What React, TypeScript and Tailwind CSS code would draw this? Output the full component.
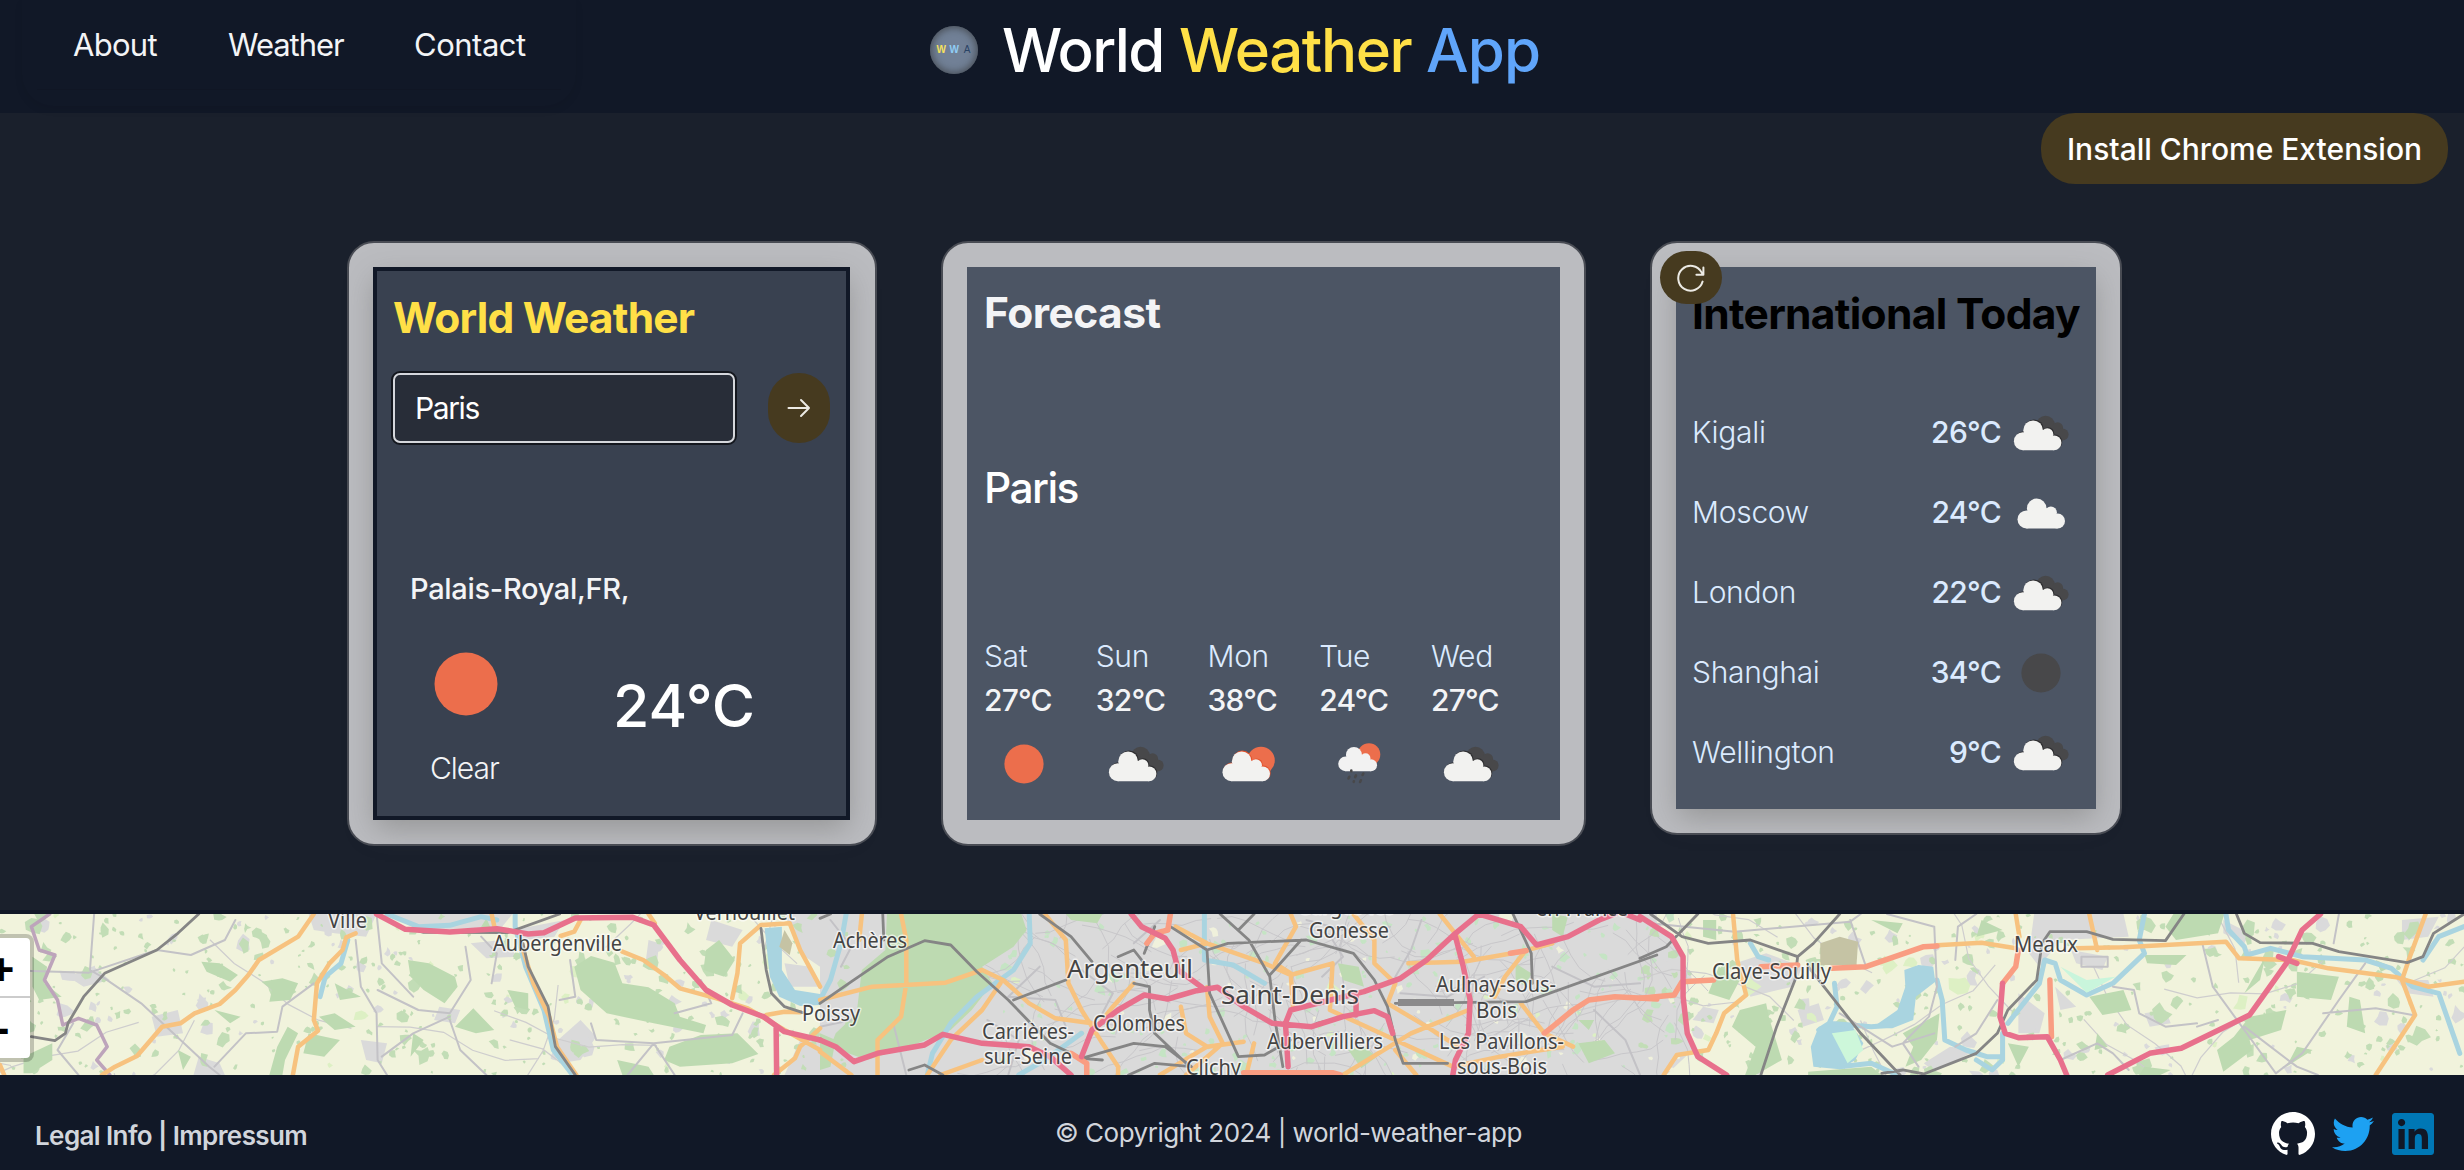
import type { ReactNode } from "react";
import { BsGithub } from "react-icons/bs";
import { FaLinkedin, FaTwitter } from "react-icons/fa";

/* ---------- weather icons (80 x 80 box) ---------- */

function CloudShape({ transform, fill }: { transform?: string; fill: string }) {
  return (
    <g transform={transform} fill={fill}>
      <circle cx="21.9" cy="48.2" r="9" />
      <circle cx="32.1" cy="37.2" r="9.8" />
      <circle cx="46.3" cy="41.2" r="6" />
      <circle cx="53" cy="49.8" r="7.4" />
      <path d="M21.9 41 L36 36 L47 38 L53 45 V57.2 H21.9Z" />
    </g>
  );
}

function IconBox({ children, size = "size-20" }: { children: ReactNode; size?: string }) {
  return (
    <svg viewBox="0 0 80 80" className={`${size} shrink-0`} aria-hidden="true">
      {children}
    </svg>
  );
}

function ClearIcon({ fill = "#ec6e4c" }: { fill?: string }) {
  return (
    <IconBox>
      <circle cx="40" cy="40" r="19.6" fill={fill} />
    </IconBox>
  );
}

function BrokenCloudsIcon() {
  return (
    <IconBox>
      <g fill="#48484a">
        <circle cx="44.6" cy="32" r="9.3" />
        <circle cx="56.6" cy="34.8" r="5.5" />
        <circle cx="61.5" cy="41.5" r="6.1" />
        <path d="M44 32 L58 32 L62 40 V47.5 H46Z" />
      </g>
      <CloudShape fill="#2f2f31" transform="translate(0.9 -0.9)" />
      <CloudShape fill="#f2f2f0" />
    </IconBox>
  );
}

function FewCloudsIcon() {
  return (
    <IconBox>
      <circle cx="53" cy="36.5" r="13.8" fill="#ec6e4c" />
      <CloudShape fill="#e2522c" transform="translate(2.3 -0.8)" />
      <CloudShape fill="#f2f2f0" transform="translate(1.6 0)" />
    </IconBox>
  );
}

function ShowerIcon() {
  return (
    <IconBox>
      <circle cx="50" cy="30.5" r="11.3" fill="#ec6e4c" />
      <CloudShape fill="#f2f2f2" transform="translate(8.7 0.5) scale(0.817)" />
      <g stroke="#48484a" strokeWidth="2.6" strokeLinecap="round">
        <path d="M32.3 46.6v.6M30.3 52.8l-.8 1.7M37 51.4l-.8 1.7M44.3 49.5l-.7 1.5M34.9 57.3l-.2.5M41.9 56.3l-.8 1.7" />
      </g>
    </IconBox>
  );
}

function CloudIcon() {
  return (
    <IconBox>
      <CloudShape fill="#f2f2f0" transform="translate(3.6 -1.8)" />
    </IconBox>
  );
}

/* ---------- map ---------- */

function makeRandom(seed: number) {
  let s = seed;
  return () => {
    s = (s * 1664525 + 1013904223) % 4294967296;
    return s / 4294967296;
  };
}

function scatter(seed: number, count: number, x0: number, x1: number, rMin: number, rMax: number) {
  const rnd = makeRandom(seed);
  let d = "";
  for (let i = 0; i < count; i++) {
    const cx = x0 + rnd() * (x1 - x0);
    const cy = rnd() * 161;
    const r = rMin + rnd() * rnd() * (rMax - rMin);
    const n = 7;
    for (let k = 0; k < n; k++) {
      const a = (k / n) * Math.PI * 2;
      const rr = r * (0.4 + rnd() * 0.9);
      d += `${k ? "L" : "M"}${(cx + Math.cos(a) * rr).toFixed(1)} ${(cy + Math.sin(a) * rr).toFixed(1)}`;
    }
    d += "Z";
  }
  return d;
}

function streets(seed: number, count: number, x0: number, x1: number, step: number) {
  const rnd = makeRandom(seed);
  let d = "";
  for (let i = 0; i < count; i++) {
    let x = x0 + rnd() * (x1 - x0);
    let y = rnd() * 161;
    let a = rnd() * Math.PI * 2;
    d += `M${x.toFixed(1)} ${y.toFixed(1)}`;
    for (let k = 0; k < 5; k++) {
      a += (rnd() - 0.5) * 0.9;
      x += Math.cos(a) * step;
      y += Math.sin(a) * step;
      d += `L${x.toFixed(1)} ${y.toFixed(1)}`;
    }
  }
  return d;
}

const ruralGreens = scatter(7, 300, 0, 850, 1.5, 10) + scatter(21, 280, 1640, 2464, 1.5, 10);
const ruralTowns = scatter(3, 90, 0, 850, 2, 12) + scatter(13, 90, 1640, 2464, 2, 12);
const meadow = scatter(31, 45, 0, 2464, 2, 12);
const cityGreens = scatter(5, 190, 1000, 1680, 1.5, 9);
const cityFields = scatter(9, 50, 1000, 1680, 2, 9);
const cityStreets = streets(17, 150, 1000, 1680, 15);
const ruralRoads = streets(19, 14, 0, 800, 34) + streets(23, 14, 1680, 2464, 34);

type Section = {
  transform: string;
  town?: string;
  forest?: string;
  water?: string;
  lake?: string;
  minor?: string;
  primary?: string;
  trunk?: string;
  motorway?: string;
  rail?: string;
};

const sections: Section[] = [
  {
    transform: "translate(0 -14) scale(0.523 0.33333)",
    town: "M590 42H720L700 110L640 100L600 90ZM740 42H980L960 80L820 90ZM900 130L960 120L990 170L930 175ZM980 90L1080 60L1060 110L1000 120ZM1360 60L1420 90L1400 140L1350 120ZM130 230L180 200L210 240L160 260ZM290 350L340 330L350 400L300 410ZM840 320L880 330L870 370L830 360ZM1060 430L1110 360L1140 410L1110 480L1070 490ZM690 420L740 430L730 490L700 480ZM1530 420L1568 400V525H1500ZM1240 120L1260 130L1255 210L1235 180ZM380 470L420 490L430 525H370ZM1500 190L1550 200L1568 260H1510ZM1500 42H1568V200L1530 160Z",
    forest:
      "M385 185L420 190L455 225L440 245L395 215ZM500 245L540 235L570 250L555 300L515 305L520 270ZM780 180L820 190L870 230L875 260L850 310L810 270L785 230ZM1130 168L1175 188L1190 250L1240 262L1290 310L1300 350L1350 375L1345 400L1250 370L1160 340L1110 270L1098 200ZM1280 440L1340 405L1410 400L1450 462L1400 490L1300 500L1270 480ZM1375 120L1405 180L1385 230L1345 210L1350 150ZM62 170L90 200L85 250L118 290L75 300L62 260ZM45 470L100 430L100 480L60 520H45ZM870 380L905 325L945 390L910 400ZM640 250L690 290L650 300ZM550 380L570 400L545 480L540 525H515L530 440ZM590 400L650 420L620 470L580 460ZM970 270L1010 280L1010 330L985 320ZM1180 480L1240 500L1250 525H1190ZM790 400L810 420L785 470ZM340 450L365 470L350 510ZM610 350L640 340L680 380L640 390ZM410 330L460 350L440 370ZM930 55L940 90L920 80Z",
    lake: "M1462 85L1495 80L1495 210L1520 270L1568 282V315L1530 318L1490 290L1472 230Z",
    water:
      "M740 42L800 80L860 76L920 50L950 60M985 42V80L1005 200L1040 330L1058 450L1095 525M665 120L652 190L622 230L612 290",
    minor:
      "M0 210L170 218L300 150L365 165L430 120L450 60M200 235L270 310L400 500L420 525M180 42L172 210L200 235M680 120L690 260L720 340L722 480L740 525M722 270L800 330L860 340L900 240L890 140M860 350L790 400L730 470M860 360L880 450L930 525M1090 180L1100 290L1070 300M1130 370L1140 420L1250 430L1400 405L1420 340M1250 430L1290 525M1250 430L1200 525M410 500L470 400L530 395L540 320L600 250M140 370L110 450L150 525M720 42L730 190L790 290M940 250L950 160L920 110M1290 340L1360 310L1340 240M60 410L0 430",
    primary:
      "M195 525L220 500L262 468L310 380L345 370L372 340L420 312L450 270L475 225L495 180L570 110L600 42M560 525L570 440L608 392L600 360L606 250L630 190L655 150L662 112L680 100M940 42L947 92M1072 108L1098 95L1110 60M1190 155L1230 180L1270 225L1300 265L1370 295L1430 325L1500 390L1568 450M1400 295L1410 220L1415 130L1455 75L1510 70L1530 150L1568 260M1568 385L1530 440L1520 475L1480 525M1465 345L1500 335L1530 337M1000 150L1020 250L1050 350L1065 440L1102 525M0 495L8 525M1240 42L1252 70",
    motorway:
      "M720 42L775 88L860 96L950 86L1010 102L1040 98L1100 54L1210 52L1250 75L1300 180L1350 270L1400 315L1460 350L1500 395L1568 420M1485 525L1484 385",
    rail: "M380 42L340 100L300 150L200 220L160 290L130 370L125 400L105 422L60 410M780 85L810 97L970 98L1070 42M1455 85L1465 210L1475 280L1500 320L1535 338M1000 130L1010 200L1048 320L1062 440L1100 525",
  },
  {
    transform: "translate(820 -14) scale(0.523 0.33333)",
    town: "M0 42H1600V525H0Z",
    forest:
      "M128 42H385L395 90L370 140L310 200L330 250L290 330L250 390L170 440L90 480L20 440L30 400L70 340L80 210L125 150ZM1010 450L1040 440L1065 470L1035 505ZM1450 430L1500 420L1520 460L1470 490ZM990 190L1030 200L1040 260L1000 240ZM470 42H540L530 70L480 60ZM0 400L30 420L20 500L0 510ZM1450 360L1480 360L1470 390ZM1330 190L1360 220L1350 260L1330 240ZM1400 42L1430 50L1420 110L1400 90Z",
    water:
      "M50 42L40 130L20 240L0 300M400 42L402 130L370 210L300 290L250 370L215 460L205 525M380 525L430 480L500 400M735 42V180L790 195L850 250",
    minor:
      "M420 200L360 290L450 300L470 380M140 370L165 525M0 380L60 360M1150 60L1130 150L1100 230M980 120L1000 170L960 230M500 210L560 280L540 340M650 60L600 130M320 360L380 420L360 525M1400 200L1480 260L1568 250M1480 330L1540 420L1568 525M1270 230L1200 290L1110 280M930 60L1000 90L1090 80M20 60L60 140L40 200",
    primary:
      "M155 42L165 120V250L155 350L110 420V525M0 300L100 260L240 248L310 210L350 240L400 310L450 355L520 370M205 525L250 420L310 330L345 250M430 42L470 120L475 250L500 330L540 430L570 500V525M650 525L740 440L810 425M740 262L745 350L770 430L700 525M680 80L740 130L850 190L900 225L980 190L975 330M900 42L910 80L870 190L900 220L905 330M1020 42L1060 120V190L1100 250L1085 310L1160 380L1220 440M975 330L1100 420L1210 500M1240 330L1130 400L1000 525M1125 190L1230 185L1340 155L1400 130M1185 42L1250 170M1345 160L1310 230L1290 290M1340 310L1385 400L1440 440M1100 450L1140 525M80 42L75 120M0 455L60 525M690 320L700 400L740 440M230 525L310 480M1210 500L1300 470L1420 440M600 250L560 320L520 400M830 430L815 525M740 130L690 150",
    trunk:
      "M810 518H980L995 525M1385 400L1440 330L1470 300L1520 290L1600 297M670 42L665 90L640 100L625 130M480 460L510 490V525M1320 160L1350 152",
    motorway:
      "M0 420L30 440L65 485L110 460L200 435L235 403L310 430L400 440L440 470L480 525M500 470L520 390L570 330L620 285L665 297L720 272L760 262L810 320L865 370L940 380L1000 350L1060 332L1085 350L1095 400M595 42L615 80L660 115L675 150L685 210L730 262M895 500L890 370L900 330L1040 275L1110 235L1160 180L1215 100L1260 42M1215 110L1230 200L1243 300L1240 400L1215 480L1210 525M1260 42L1340 80L1370 135L1430 110L1490 60L1520 42M1540 42L1568 60M1025 280V345",
    rail: "M0 310L60 245L130 170L200 122L250 135L300 215L360 300L440 430L500 475L540 480M370 300L470 240M120 42L122 120M420 42L480 110L520 185M600 250L630 260V330L640 400L700 490M740 150L780 130L930 120L1020 160L1060 240L1085 320L1100 420L1115 490L1200 490M740 150L745 280L800 470L850 465L900 420M670 80L740 150M765 42L820 120L860 230L870 360L885 500M920 120L860 225M1100 310L1350 305L1600 165M500 475L600 430L660 440L710 500L640 490L590 525M1325 42L1360 160L1362 250M170 510L200 495L235 525M950 370L1060 330M570 170L600 150L620 190M0 55L20 42M620 160L640 80M800 90L830 42",
  },
  {
    transform: "translate(1640 -14) scale(0.5255 0.33333)",
    town: "M0 42L60 110L80 170L82 290L100 450L50 525H0ZM190 185L240 160L310 200L290 260L210 290ZM750 42H920L930 110L800 120L760 200L740 160ZM720 280L770 340L760 400L720 400ZM300 330L340 310L350 360L310 380ZM540 490L590 440L640 450L560 515ZM820 150L890 170L880 210L830 190ZM1110 60L1160 100L1150 130L1110 100ZM960 340L1000 330L1010 370L970 380ZM1450 60L1520 50L1500 110L1450 120ZM790 260L830 320L800 330ZM120 320L150 330L140 370L100 360ZM1440 240L1500 240L1510 290L1460 280Z",
    forest:
      "M1015 42H1112L1100 100L1020 120L1000 80ZM1160 350L1230 330L1220 390L1160 420L1165 450L1110 515L1098 450L1130 410ZM855 290L920 270L935 330L880 345ZM1250 215L1330 230L1315 300L1250 290ZM120 60L145 60V120L120 110ZM190 330L240 310L245 350L270 480L220 525H200L220 440L175 380ZM500 400L570 340L565 420L535 480L505 500L520 440ZM1350 290L1370 300L1380 400L1345 380ZM960 165L1040 165L1020 195L965 190ZM440 60L500 70L490 100ZM650 60L690 90L640 110ZM1190 170L1180 240L1150 280ZM700 430L740 440L720 500ZM870 400L890 440L865 450ZM1400 180L1430 200L1410 215ZM1250 440L1280 450L1230 500ZM320 515L440 500L460 525H320ZM150 200L190 240L170 300L130 280ZM960 500L1010 510L990 525H950Z",
    lake: "M503 210L530 195L558 200L562 245L525 290L520 360L480 385L440 385L490 330L505 260ZM340 380L400 370L425 430L410 480L380 508L330 500L325 440Z",
    water:
      "M480 375L440 380L360 370L340 390M565 240L575 300L580 420L620 450L660 470L688 470M960 42L950 120L960 160L900 250L850 285L800 240L790 190L770 180L760 250L700 370M1115 42L1120 90L1150 140L1155 165L1200 145L1260 170L1380 180L1430 205L1470 260L1520 280L1540 370L1560 460M210 130L225 170L245 180M370 250L375 320L360 370M380 500L440 490L490 525M640 480L670 510L690 480V400M1568 80L1520 110L1490 180",
    minor:
      "M20 70L180 95L400 65L420 42M470 42L560 80L565 260L550 350L500 430L530 500M600 180L605 80L640 42M900 260L940 270L950 340L1000 380L1060 370M1070 130L1090 260L1150 390L1210 520L1260 460L1330 300L1380 190M800 480L870 430L900 460L930 510M1300 340L1400 325L1470 345M430 200L400 60M380 340L480 440L560 400M600 440L640 400L680 300M840 170H890V200H840ZM1150 380L1250 500L1290 525M1320 130L1330 42M1060 380L1100 360",
    primary:
      "M565 136L650 128L715 145M830 145L920 142L1115 125L1140 175L1240 180L1310 205L1440 232L1500 260L1568 245M715 42L722 110M855 42L870 150M45 525L70 465L130 450L145 400L160 340L202 285L185 180L177 42M1400 525L1475 345L1450 240L1465 170L1495 42",
    trunk:
      "M0 295L65 285L80 245L140 240M230 200L300 195M365 205L430 200L540 140L565 138M690 250L715 200L720 150M780 240L783 410",
    motorway:
      "M0 50L60 110L82 170V290L90 400L110 470L165 525M690 250L685 350L695 400L720 413L775 410L800 480L812 525M890 525L970 460L1030 445L1160 345L1185 290L1230 190L1260 90L1295 42M1215 170L1250 190",
    rail: "M20 42L80 110L130 130L210 120L300 170L330 130L380 42M110 42L50 140L0 175M300 170L295 240L260 380L230 525M320 200L350 260L420 400L495 525M460 520L500 510L540 522L640 460L680 400L700 330L755 240L765 130L780 95L850 95L900 118L1000 122L1035 42M1135 42L1150 100L1180 128L1280 130L1330 155L1460 188L1490 170L1510 100L1568 42",
  },
];

const labels: { text: string; x: number; y: number; width: number; size?: number }[] = [
  { text: "Ville", x: 328, y: 14, width: 39 },
  { text: "Aubergenville", x: 493, y: 36.5, width: 129 },
  { text: "Vernouillet", x: 694, y: 6, width: 101 },
  { text: "Poissy", x: 802, y: 107, width: 58 },
  { text: "Achères", x: 833, y: 33.5, width: 74 },
  { text: "Argenteuil", x: 1067, y: 64, width: 126, size: 26 },
  { text: "Saint-Denis", x: 1221, y: 89.5, width: 138, size: 26 },
  { text: "Garges-lès-", x: 1297, y: 0, width: 104 },
  { text: "Gonesse", x: 1309, y: 24, width: 80 },
  { text: "Colombes", x: 1093, y: 116.5, width: 92 },
  { text: "Carrières-", x: 982, y: 124.5, width: 92 },
  { text: "sur-Seine", x: 984, y: 149.5, width: 88 },
  { text: "Clichy", x: 1186, y: 160.5, width: 55 },
  { text: "Aubervilliers", x: 1267, y: 134.5, width: 116 },
  { text: "Aulnay-sous-", x: 1436, y: 78, width: 120 },
  { text: "Bois", x: 1476, y: 104, width: 41 },
  { text: "Les Pavillons-", x: 1439, y: 135, width: 125 },
  { text: "sous-Bois", x: 1457, y: 160, width: 90 },
  { text: "en-France", x: 1536, y: 1.5, width: 92 },
  { text: "Claye-Souilly", x: 1712, y: 65, width: 119 },
  { text: "Meaux", x: 2014, y: 37.5, width: 64 },
];

function Layer({ d, color, width }: { d?: string; color: string; width: number }) {
  if (!d) return null;
  return (
    <path
      d={d}
      fill="none"
      stroke={color}
      strokeWidth={width}
      strokeLinejoin="round"
      strokeLinecap="round"
      vectorEffect="non-scaling-stroke"
    />
  );
}

function MapDrawing() {
  return (
    <svg viewBox="0 0 2464 161" className="block h-[161px] w-[2464px]" role="img" aria-label="Map of Paris region">
      <rect width="2464" height="161" fill="#f1f3dc" />
      {sections.map((s) => (
        <g key={s.transform} transform={s.transform}>
          <path d={s.town} fill="#dadada" />
        </g>
      ))}
      <path d={meadow} fill="#ddf0c4" />
      <path d={ruralTowns} fill="#dadadb" />
      <path d={ruralGreens} fill="#c2ddb6" />
      <path d={cityFields} fill="#f0f1dc" />
      <path d={cityGreens} fill="#c5e4c4" />
      <path d={ruralRoads} fill="none" stroke="#cecdce" strokeWidth="1.2" />
      <path d={cityStreets} fill="none" stroke="#c8c7ca" strokeWidth="1" />
      {sections.map((s) => (
        <g key={s.transform} transform={s.transform}>
          <path d={s.forest} fill="#bddab1" />
          <path d={s.lake} fill="#a9d4e0" />
          <Layer d={s.water} color="#a9d4e0" width={5} />
          <Layer d={s.minor} color="#c3c2c6" width={2} />
        </g>
      ))}
      <g transform="translate(1640 -14) scale(0.5255 0.33333)">
        <path d="M343 130L380 110L415 125L412 195H343Z" fill="#c5c3a4" />
        <path d="M800 200L850 240L905 230L850 278Z" fill="#c9f5dc" />
        <path d="M365 400L410 390L425 450L395 490Z" fill="#cdf7da" />
      </g>
      <g transform="translate(0 -14) scale(0.523 0.33333)">
        <path d="M1500 90L1515 130L1510 165L1490 140Z" fill="#c5c3a4" />
        <Layer
          d="M95 42L60 80L75 150L105 165L85 240L110 300L120 375L150 355L185 375L205 440L185 480L210 525"
          color="#bda4bb"
          width={3.5}
        />
      </g>
      {sections.map((s) => (
        <g key={s.transform} transform={s.transform}>
          <Layer d={s.primary} color="#f7c27f" width={4.5} />
          <Layer d={s.rail} color="#858585" width={2.8} />
          <Layer d={s.trunk} color="#f99d82" width={5.5} />
          <Layer d={s.motorway} color="#e8708c" width={5.5} />
        </g>
      ))}
      <rect x="1398" y="85" width="56" height="7" fill="#8b8a8b" />
      <g
        fontFamily="'Noto Sans', sans-serif"
        fill="#444"
        stroke="#ffffff"
        strokeOpacity="0.65"
        strokeWidth="3"
        strokeLinejoin="round"
        paintOrder="stroke"
      >
        {labels.map((l) => (
          <text key={l.text} x={l.x} y={l.y} fontSize={l.size ?? 21} textLength={l.width} lengthAdjust="spacingAndGlyphs">
            {l.text}
          </text>
        ))}
      </g>
    </svg>
  );
}

/* ---------- page ---------- */

function Header() {
  return (
    <header className="flex h-[113px] items-start bg-[#111827] text-gray-100">
      <nav className="ml-[22px] h-[106px] w-[554px] shrink-0 rounded-b-[32px] px-[15px] shadow-[0_4px_8px_rgba(0,0,0,0.07)]">
        <ul className="flex h-[90px] items-center border-b border-[#101624] pl-9 pt-px text-[31px] leading-10">
          <li className="w-[155px] tracking-[-0.7px]">About</li>
          <li className="w-[186px] tracking-[-1.05px]">Weather</li>
          <li className="tracking-[-0.49px]">Contact</li>
        </ul>
      </nav>
      <div className="ml-[354px] flex h-[99px] items-center">
        <div className="flex size-12 items-center justify-center gap-[4px] rounded-full bg-[#718096] font-['Liberation_Sans'] text-[10px] font-bold leading-none shadow-[inset_0_0_7px_2px_rgba(50,50,50,0.6)]">
          <span className="w-[9px] text-center text-[#f6e05e]">W</span>
          <span className="w-[9px] text-center text-[#90cdf4]">W</span>
          <span className="w-[9px] text-center font-normal text-[#2a4365]">A</span>
        </div>
        <h1 className="ml-6 flex text-[60px] font-medium leading-[72px]">
          <span className="w-[177px] tracking-[-1.6px] text-white">World</span>
          <span className="w-[247px] tracking-[-1.4px] text-[#ffe047]">Weather</span>
          <span className="tracking-[-0.8px] text-[#60a5fa]">App</span>
        </h1>
      </div>
    </header>
  );
}

function Card({ className, children }: { className: string; children: ReactNode }) {
  return (
    <section className={`relative rounded-[27px] border-2 border-[#494c54] bg-[#bbbcc0] p-6 ${className}`}>
      {children}
    </section>
  );
}

function WorldWeatherCard() {
  return (
    <Card className="h-[605px] w-[530px]">
      <div className="mr-px h-full border-4 border-[#111827] bg-[#394150] pt-[17px] shadow-[0_10px_28px_-2px_rgba(90,90,85,0.4)]">
        <h2 className="pl-4 text-[42.5px] font-bold leading-[60px] tracking-[-0.78px] text-[#ffe047]">World Weather</h2>
        <div className="mt-[23px] flex pl-[14px]">
          <div className="h-[74px] w-[346px] rounded-[9px] border-2 border-[#14171e] bg-[#14171e]">
            <div className="flex h-full items-center rounded-[7px] border-2 border-[#d5d7dc] bg-[#282d38] pl-5 text-[30px] tracking-[-1.4px] text-white">
              Paris
            </div>
          </div>
          <button className="ml-[31px] mt-[2px] flex h-[70px] w-[62px] items-center justify-center rounded-[32px] bg-[#463a1f]">
            <svg width="24" height="20" viewBox="0 0 24 20" fill="none" stroke="#eceae4" strokeWidth="2" strokeLinecap="round" strokeLinejoin="round">
              <path d="M1.5 10H22M14 2L22 10L14 18" />
            </svg>
          </button>
        </div>
        <p className="mt-[124px] pl-[33px] text-[29px] font-medium leading-10 tracking-[-0.31px] text-gray-100">Palais-Royal,FR,</p>
        <div className="mt-[43px] flex pl-[53px]">
          <div className="flex flex-col">
            <svg viewBox="0 0 64 64" className="ml-[4px] size-16">
              <circle cx="32" cy="32" r="31.5" fill="#ec6e4c" />
            </svg>
            <span className="mt-8 w-[184px] text-[30px] font-light leading-10 tracking-[-1px] text-gray-100">Clear</span>
          </div>
          <span className="mt-[18px] -ml-[1px] text-[59px] font-medium leading-[72px] text-white">24°C</span>
        </div>
      </div>
    </Card>
  );
}

const days = [
  { day: "Sat", temp: "27°C", icon: <ClearIcon /> },
  { day: "Sun", temp: "32°C", icon: <BrokenCloudsIcon /> },
  { day: "Mon", temp: "38°C", icon: <FewCloudsIcon /> },
  { day: "Tue", temp: "24°C", icon: <ShowerIcon /> },
  { day: "Wed", temp: "27°C", icon: <BrokenCloudsIcon /> },
];

function ForecastCard() {
  return (
    <Card className="ml-16 h-[605px] w-[645px]">
      <div className="h-full bg-[#4c5564] pl-[17px] pt-4">
        <h2 className="text-[42.5px] font-bold leading-[60px] tracking-[-0.54px] text-gray-100">Forecast</h2>
        <p className="mt-[115px] text-[42.5px] font-medium leading-[60px] tracking-[-1.6px] text-white">Paris</p>
        <div className="mt-[118px] flex">
          {days.map((d, i) => (
            <div key={i} className="w-[111.75px] text-[30px] leading-10">
              <div className="font-light tracking-[-0.35px] text-[#dbeafe]">{d.day}</div>
              <div className="mt-1 font-medium tracking-[-0.8px] text-gray-100">{d.temp}</div>
              <div className="mt-1">{d.icon}</div>
            </div>
          ))}
        </div>
      </div>
    </Card>
  );
}

const cities = [
  { city: "Kigali", temp: "26°C", icon: <BrokenCloudsIcon /> },
  { city: "Moscow", temp: "24°C", icon: <CloudIcon /> },
  { city: "London", temp: "22°C", icon: <BrokenCloudsIcon /> },
  { city: "Shanghai", temp: "34°C", icon: <ClearIcon fill="#48484a" /> },
  { city: "Wellington", temp: "9°C", icon: <BrokenCloudsIcon /> },
];

function InternationalCard() {
  return (
    <Card className="ml-16 h-[594px] w-[472px]">
      <div className="h-full bg-[#4c5564] pt-[17px] shadow-[0_10px_28px_-2px_rgba(90,90,85,0.4)]">
        <h2 className="whitespace-nowrap pl-4 text-[42.5px] font-bold leading-[60px] tracking-[-0.68px] text-black">
          International Today
        </h2>
        <ul className="mt-[49px] pl-4">
          {cities.map((c) => (
            <li key={c.city} className="flex h-20 items-center text-[30px] leading-10 text-[#dbeafe]">
              <span className="grow pb-[2px] font-light tracking-[-0.3px]">{c.city}</span>
              <span className="pb-[2px] font-medium tracking-[-0.7px]">{c.temp}</span>
              <span className="mr-[15px]">{c.icon}</span>
            </li>
          ))}
        </ul>
      </div>
      <button className="absolute left-2 top-2 flex h-[53px] w-[62px] items-center justify-center rounded-[27px] bg-[#463a1f]">
        <svg width="30" height="30" viewBox="0 0 30 30" fill="none" stroke="#eceae4" strokeWidth="2" strokeLinecap="round" strokeLinejoin="round">
          <path d="M26.6 18.6A12.4 12.4 0 1 1 25.6 9.4L27.2 11.6M27.4 4.6V11.8H20.4" />
        </svg>
      </button>
    </Card>
  );
}

function MapStrip() {
  return (
    <div className="relative h-[165px] overflow-hidden border-t-4 border-[#111827]">
      <MapDrawing />
      <div className="absolute -left-[34px] top-5 h-[128px] w-[68px] rounded-[8px] border-4 border-black/20 bg-white bg-clip-padding text-center font-['Liberation_Mono'] text-[44px] font-bold leading-[60px] text-black">
        <div className="h-[60px] border-b-2 border-[#ccc] pl-[3px] pt-[5px]">+</div>
        <div className="h-[60px] pl-[3px] pt-[3px]">-</div>
      </div>
    </div>
  );
}

function Footer() {
  return (
    <footer className="flex h-[95px] items-start bg-[#111827] text-[26px] leading-10 text-gray-300">
      <span className="ml-[35px] mt-[41px] w-[1020px] font-semibold tracking-[-0.6px]">Legal Info | Impressum</span>
      <span className="mt-[38px] tracking-[-0.5px]">© Copyright 2024 | world-weather-app</span>
      <div className="ml-auto mr-[30px] mt-[36px] flex h-[46px] items-center">
        <BsGithub className="size-[44px] text-white" />
        <FaTwitter className="ml-[17px] size-[42px] text-[#1da1f2]" />
        <FaLinkedin className="ml-[18px] h-[48px] w-[42px] text-[#0077b5]" />
      </div>
    </footer>
  );
}

export default function App() {
  return (
    <div className="h-[1170px] w-[2464px] overflow-hidden bg-[#1a202c] font-['Inter',sans-serif]">
      <Header />
      <main className="flex h-[797px] flex-col">
        <button className="mr-4 h-[71px] w-[407px] self-end rounded-[34px] bg-[#463a1f] text-[30px] font-medium leading-10 text-white">
          Install Chrome Extension
        </button>
        <div className="mt-[57px] flex items-start pl-[347px]">
          <WorldWeatherCard />
          <ForecastCard />
          <InternationalCard />
        </div>
      </main>
      <MapStrip />
      <Footer />
    </div>
  );
}
